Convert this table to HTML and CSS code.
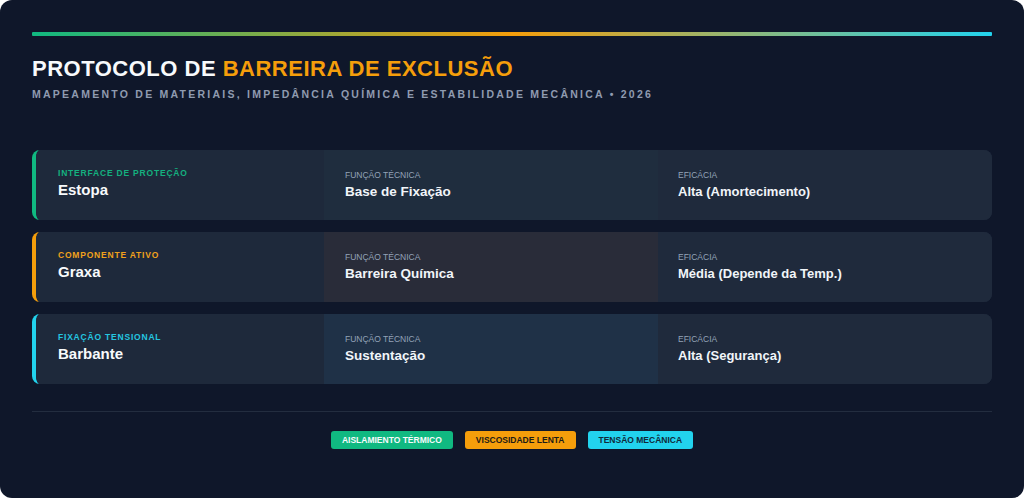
FILE: index.html
```html
<!DOCTYPE html>
<html lang="pt">
<head>
<meta charset="utf-8">
<title>Protocolo de Barreira de Exclusão</title>
<link rel="stylesheet" href="styles.css">
</head>
<body>
<main class="panel">
  <div class="accent-bar"></div>
  <header class="header">
    <h1 class="title">PROTOCOLO DE <span class="hl">BARREIRA DE EXCLUSÃO</span></h1>
    <p class="subtitle">MAPEAMENTO DE MATERIAIS, IMPEDÂNCIA QUÍMICA E ESTABILIDADE MECÂNICA • 2026</p>
  </header>

  <section class="rows">
    <div class="row row-green">
      <div class="cell cell-main">
        <div class="tag">INTERFACE DE PROTEÇÃO</div>
        <div class="main-value">Estopa</div>
      </div>
      <div class="cell cell-func">
        <div class="label">FUNÇÃO TÉCNICA</div>
        <div class="value value-func">Base de Fixação</div>
      </div>
      <div class="cell cell-eff">
        <div class="label">EFICÁCIA</div>
        <div class="value">Alta (Amortecimento)</div>
      </div>
    </div>

    <div class="row row-amber">
      <div class="cell cell-main">
        <div class="tag">COMPONENTE ATIVO</div>
        <div class="main-value">Graxa</div>
      </div>
      <div class="cell cell-func">
        <div class="label">FUNÇÃO TÉCNICA</div>
        <div class="value value-func">Barreira Química</div>
      </div>
      <div class="cell cell-eff">
        <div class="label">EFICÁCIA</div>
        <div class="value">Média (Depende da Temp.)</div>
      </div>
    </div>

    <div class="row row-cyan">
      <div class="cell cell-main">
        <div class="tag">FIXAÇÃO TENSIONAL</div>
        <div class="main-value">Barbante</div>
      </div>
      <div class="cell cell-func">
        <div class="label">FUNÇÃO TÉCNICA</div>
        <div class="value value-func">Sustentação</div>
      </div>
      <div class="cell cell-eff">
        <div class="label">EFICÁCIA</div>
        <div class="value">Alta (Segurança)</div>
      </div>
    </div>
  </section>

  <footer class="footer">
    <span class="badge badge-green">AISLAMIENTO TÉRMICO</span>
    <span class="badge badge-amber">VISCOSIDADE LENTA</span>
    <span class="badge badge-cyan">TENSÃO MECÂNICA</span>
  </footer>
</main>
</body>
</html>
```

FILE: styles.css
```css
* { box-sizing: border-box; }

html, body {
  margin: 0;
  padding: 0;
  background: #ffffff;
}

body {
  font-family: "Liberation Sans", Arial, sans-serif;
}

.panel {
  width: 1024px;
  height: 498px;
  background: #0f172a;
  border-radius: 12px;
  padding: 32px;
  display: flex;
  flex-direction: column;
}

.accent-bar {
  height: 4px;
  border-radius: 1px;
  background: linear-gradient(90deg, #10b981 0%, #f59e0b 50%, #22d3ee 100%);
}

.header {
  margin-top: 20px;
  margin-bottom: 49px;
}

.title {
  margin: 0;
  font-size: 22px;
  line-height: 1.2;
  font-weight: 700;
  letter-spacing: 0.5px;
  color: #f8fafc;
}

.title .hl { color: #f59e0b; }

.subtitle {
  margin: 6px 0 0;
  font-size: 10.5px;
  line-height: 1.2;
  font-weight: 700;
  letter-spacing: 2.25px;
  color: #8f9bb0;
}

.rows {
  display: flex;
  flex-direction: column;
  gap: 12px;
}

.row {
  display: grid;
  grid-template-columns: 288px 1fr 1fr;
  height: 70px;
  border-radius: 8px;
  overflow: hidden;
  background: #1e293b;
  border-left: 4px solid #10b981;
}

.row-green { border-left-color: #10b981; }
.row-amber { border-left-color: #f59e0b; }
.row-cyan { border-left-color: #22d3ee; }

.cell {
  display: flex;
  flex-direction: column;
  justify-content: center;
  padding: 0 20px;
}

.cell-main {
  padding-left: 22px;
  padding-bottom: 3px;
  background: #1e293b;
}

.cell-func { padding-left: 21px; }
.row-green .cell-func { background: #1f2d3e; }
.row-amber .cell-func { background: #292c39; }
.row-cyan .cell-func { background: #1f3147; }

.cell-eff { background: #1f2a3c; }

.tag {
  font-size: 8.5px;
  line-height: 1.2;
  font-weight: 700;
  letter-spacing: 0.8px;
  margin-bottom: 3px;
}

.row-green .tag { color: #14b17f; }
.row-amber .tag { color: #f0a11c; }
.row-cyan .tag { color: #24c6e0; }

.main-value {
  font-size: 15px;
  line-height: 1.2;
  font-weight: 700;
  color: #f8fafc;
}

.label {
  font-size: 8.5px;
  line-height: 1.2;
  font-weight: 400;
  color: #94a3b8;
  margin-bottom: 4px;
}

.value {
  font-size: 13px;
  line-height: 1.2;
  font-weight: 700;
  color: #f1f5f9;
}

.value-func { font-size: 13.5px; }

.footer {
  margin-top: 27px;
  border-top: 1px solid #232d3f;
  padding-top: 19px;
  display: flex;
  justify-content: center;
  gap: 12px;
}

.badge {
  display: inline-flex;
  align-items: center;
  height: 18px;
  padding: 0 11px;
  border-radius: 3px;
  font-size: 8.5px;
  font-weight: 700;
  line-height: 1;
}

.badge-green { background: #10b981; color: #f8fafc; }
.badge-amber { background: #f59e0b; color: #1e1b16; }
.badge-cyan { background: #22d3ee; color: #0f2a3a; }
```
